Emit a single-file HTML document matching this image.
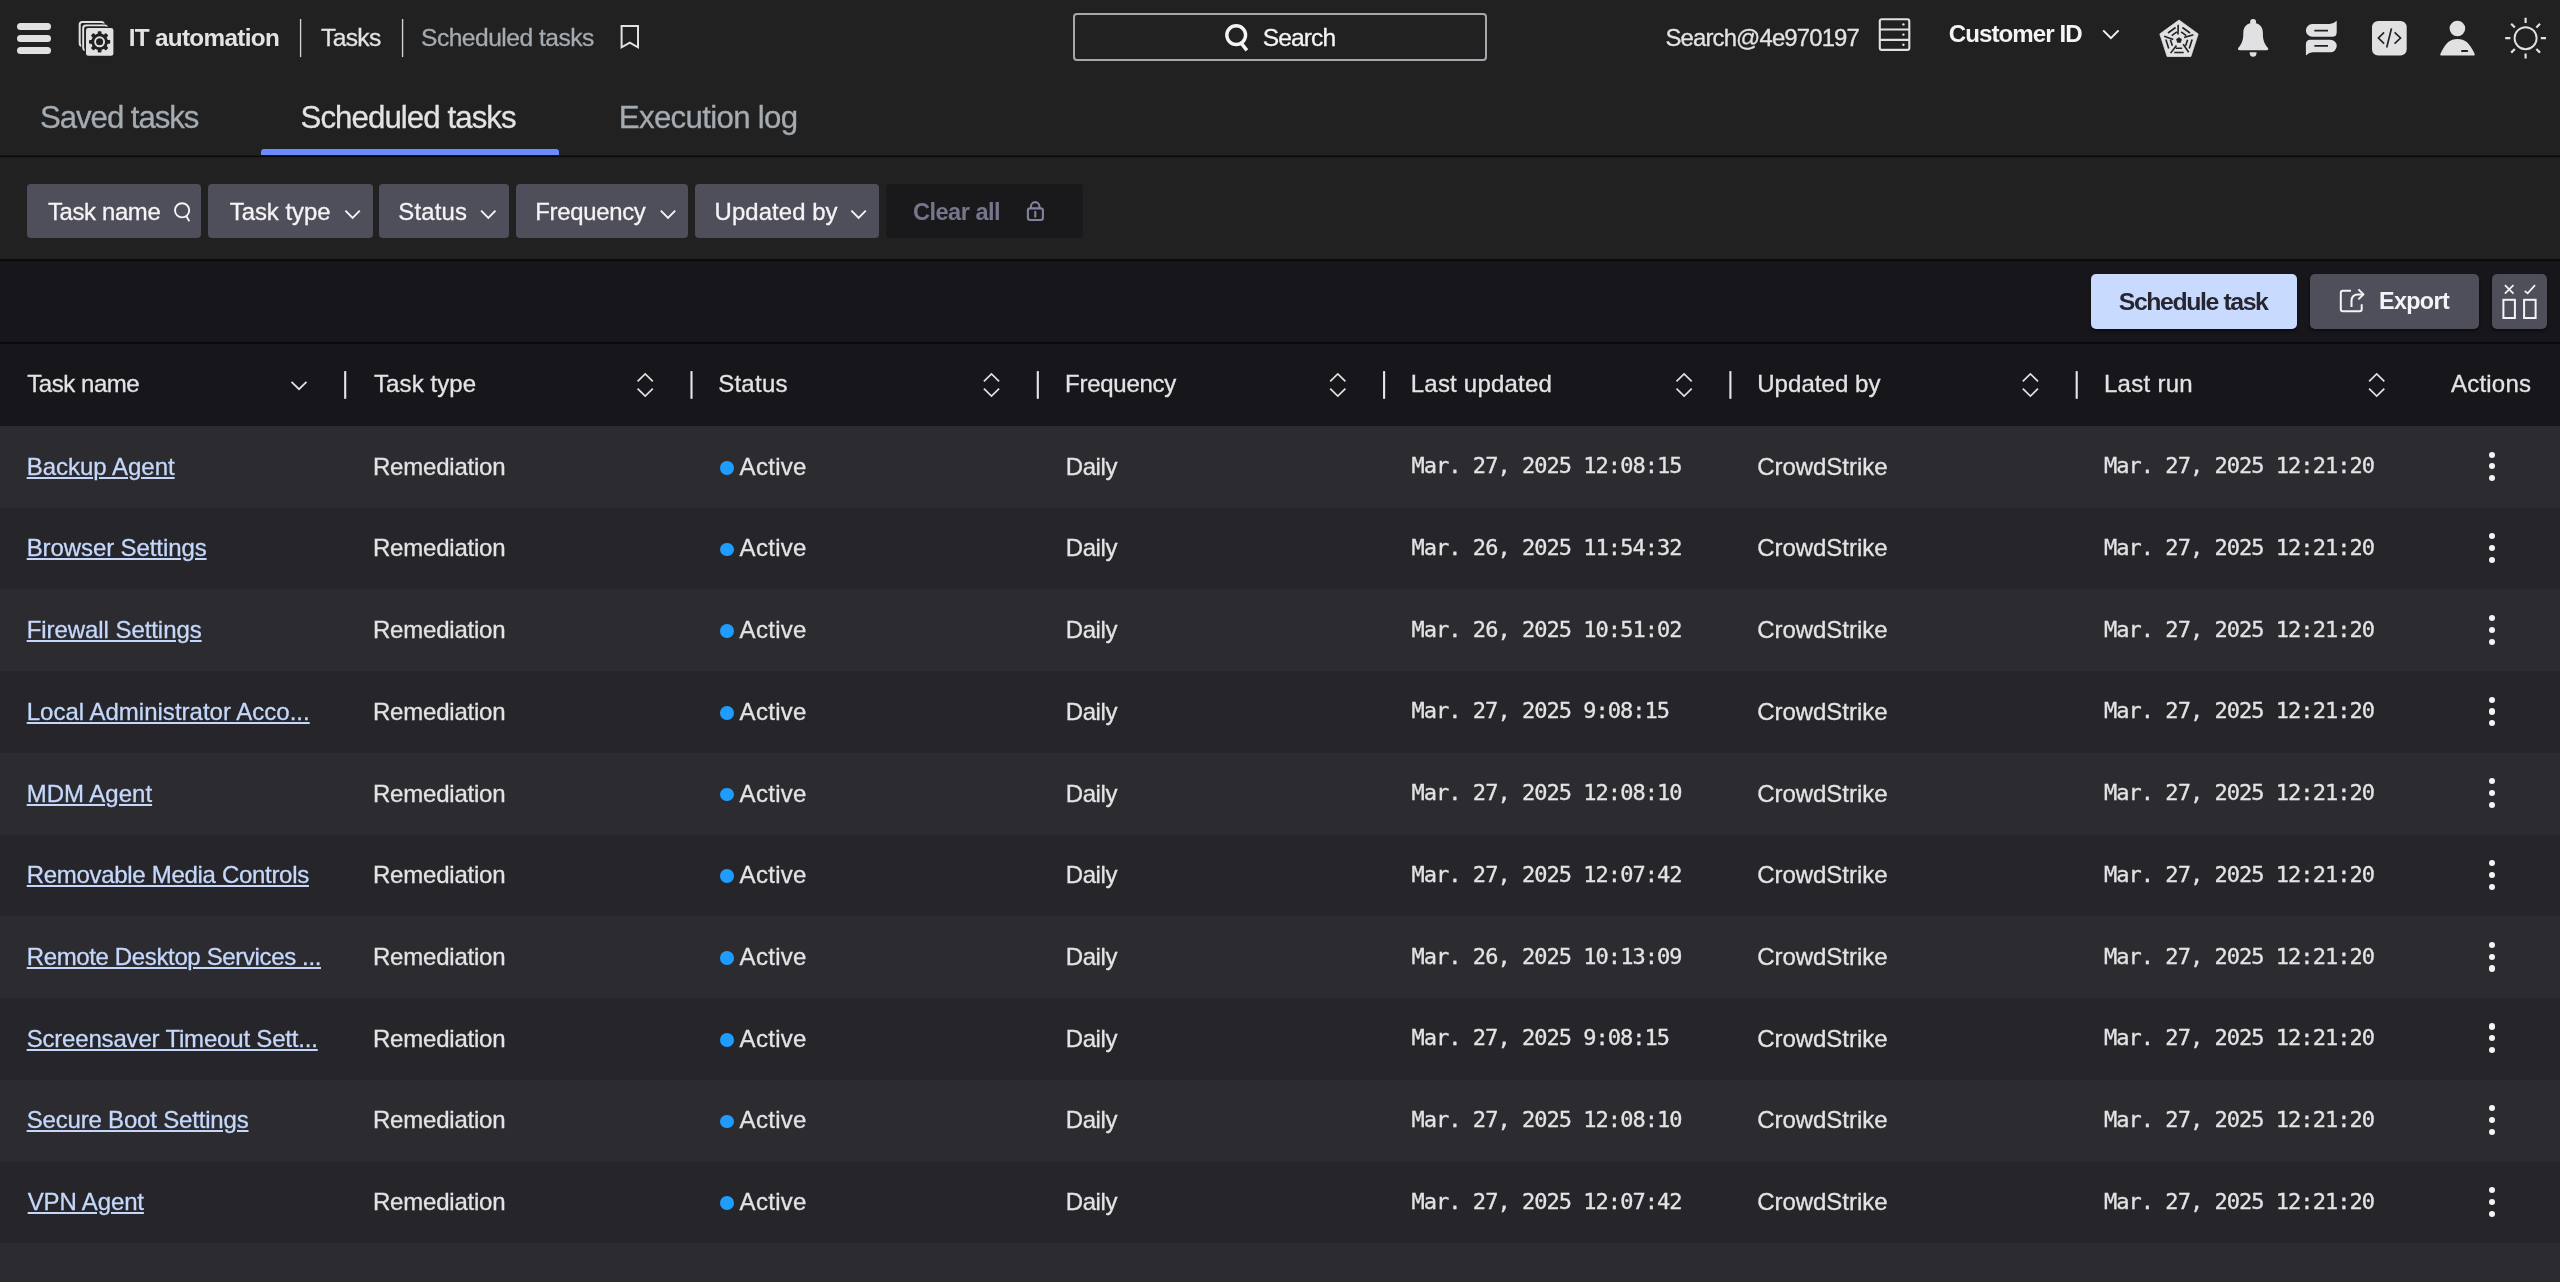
<!DOCTYPE html>
<html lang="en"><head><meta charset="utf-8"><title>IT automation - Scheduled tasks</title>
<style>
html,body{margin:0;padding:0;background:#2c2b30;}
body{width:2560px;height:1282px;position:relative;overflow:hidden;font-family:"Liberation Sans", sans-serif;}
.b{position:absolute;}
.t{position:absolute;white-space:pre;line-height:1;-webkit-text-stroke:0.3px currentColor;}
#txt{position:absolute;left:0;top:0;width:2560px;height:1282px;will-change:transform;}
svg{position:absolute;overflow:visible;}
</style></head><body>
<div class="b" style="left:0px;top:0px;width:2560px;height:157px;background:#212121;"></div>
<div class="b" style="left:0px;top:155px;width:2560px;height:1px;background:#161617;"></div>
<div class="b" style="left:0px;top:156px;width:2560px;height:1px;background:#09090b;"></div>
<div class="b" style="left:0px;top:157px;width:2560px;height:1px;background:#1d1d1e;"></div>
<div class="b" style="left:261px;top:149px;width:298px;height:6px;background:#6a8bfd;border-radius:3px 3px 0 0;"></div>
<div class="b" style="left:0px;top:158px;width:2560px;height:101px;background:#212121;"></div>
<div class="b" style="left:0px;top:259px;width:2560px;height:2px;background:#0a0a0c;"></div>
<div class="b" style="left:0px;top:261px;width:2560px;height:83px;background:#17161b;"></div>
<div class="b" style="left:0px;top:261px;width:2560px;height:1px;background:#121115;"></div>
<div class="b" style="left:0px;top:342px;width:2560px;height:2px;background:#0a0a0c;"></div>
<div class="b" style="left:0px;top:344px;width:2560px;height:82px;background:#17161b;"></div>
<div class="b" style="left:0px;top:426px;width:2560px;height:856px;background:#2c2b30;"></div>
<div class="b" style="left:0px;top:508px;width:2560px;height:81px;background:#26252a;"></div>
<div class="b" style="left:0px;top:507px;width:2560px;height:1px;background:#2a292e;"></div>
<div class="b" style="left:0px;top:589px;width:2560px;height:1px;background:#2a292e;"></div>
<div class="b" style="left:0px;top:672px;width:2560px;height:80px;background:#26252a;"></div>
<div class="b" style="left:0px;top:671px;width:2560px;height:1px;background:#27262b;"></div>
<div class="b" style="left:0px;top:752px;width:2560px;height:1px;background:#27262b;"></div>
<div class="b" style="left:0px;top:835px;width:2560px;height:81px;background:#26252a;"></div>
<div class="b" style="left:0px;top:834px;width:2560px;height:1px;background:#29282d;"></div>
<div class="b" style="left:0px;top:916px;width:2560px;height:1px;background:#2b2a2f;"></div>
<div class="b" style="left:0px;top:998px;width:2560px;height:81px;background:#26252a;"></div>
<div class="b" style="left:0px;top:997px;width:2560px;height:1px;background:#2b2a2f;"></div>
<div class="b" style="left:0px;top:1079px;width:2560px;height:1px;background:#28272c;"></div>
<div class="b" style="left:0px;top:1162px;width:2560px;height:81px;background:#26252a;"></div>
<div class="b" style="left:0px;top:1161px;width:2560px;height:1px;background:#28272c;"></div>
<div class="b" style="left:17px;top:23px;width:34px;height:7px;background:#e1e1e3;border-radius:3.5px;"></div>
<div class="b" style="left:17px;top:35px;width:34px;height:7px;background:#e1e1e3;border-radius:3.5px;"></div>
<div class="b" style="left:17px;top:47px;width:34px;height:7px;background:#e1e1e3;border-radius:3.5px;"></div>
<div class="b" style="left:1073px;top:13px;width:414px;height:48px;background:transparent;box-sizing:border-box;border:2px solid #a3a8ad;border-radius:4px;"></div>
<div class="b" style="left:27.3px;top:184px;width:174.0px;height:54.4px;background:#4f4e5b;border-radius:4px;"></div>
<div class="b" style="left:208px;top:184px;width:164.6px;height:54.4px;background:#4f4e5b;border-radius:4px;"></div>
<div class="b" style="left:379px;top:184px;width:129.9px;height:54.4px;background:#4f4e5b;border-radius:4px;"></div>
<div class="b" style="left:515.7px;top:184px;width:172.3px;height:54.4px;background:#4f4e5b;border-radius:4px;"></div>
<div class="b" style="left:695px;top:184px;width:184px;height:54.4px;background:#4f4e5b;border-radius:4px;"></div>
<div class="b" style="left:886px;top:184px;width:197px;height:54.4px;background:#19191b;border-radius:4px;"></div>
<div class="b" style="left:2091px;top:274px;width:206.3px;height:55px;background:#c8dbfe;border-radius:5px;box-shadow:0 2px 3px rgba(0,0,0,.5);"></div>
<div class="b" style="left:2310px;top:274px;width:168.5px;height:54.5px;background:#4f4e5b;border-radius:5px;box-shadow:0 2px 3px rgba(0,0,0,.5);"></div>
<div class="b" style="left:2492px;top:274px;width:54.7px;height:55px;background:#4f4e5b;border-radius:5px;box-shadow:0 2px 3px rgba(0,0,0,.5);"></div>
<div class="b" style="left:719.9px;top:460.9px;width:13.8px;height:13.8px;background:#1f9dff;border-radius:50%;"></div>
<div class="b" style="left:2489.2px;top:451.5px;width:6.2px;height:6.2px;background:#f4f4f6;border-radius:50%;"></div>
<div class="b" style="left:2489.2px;top:463.3px;width:6.2px;height:6.2px;background:#f4f4f6;border-radius:50%;"></div>
<div class="b" style="left:2489.2px;top:475.2px;width:6.2px;height:6.2px;background:#f4f4f6;border-radius:50%;"></div>
<div class="b" style="left:719.9px;top:542.6px;width:13.8px;height:13.8px;background:#1f9dff;border-radius:50%;"></div>
<div class="b" style="left:2489.2px;top:533.2px;width:6.2px;height:6.2px;background:#f4f4f6;border-radius:50%;"></div>
<div class="b" style="left:2489.2px;top:545.0px;width:6.2px;height:6.2px;background:#f4f4f6;border-radius:50%;"></div>
<div class="b" style="left:2489.2px;top:556.9px;width:6.2px;height:6.2px;background:#f4f4f6;border-radius:50%;"></div>
<div class="b" style="left:719.9px;top:624.3px;width:13.8px;height:13.8px;background:#1f9dff;border-radius:50%;"></div>
<div class="b" style="left:2489.2px;top:614.9px;width:6.2px;height:6.2px;background:#f4f4f6;border-radius:50%;"></div>
<div class="b" style="left:2489.2px;top:626.7px;width:6.2px;height:6.2px;background:#f4f4f6;border-radius:50%;"></div>
<div class="b" style="left:2489.2px;top:638.6px;width:6.2px;height:6.2px;background:#f4f4f6;border-radius:50%;"></div>
<div class="b" style="left:719.9px;top:706.0px;width:13.8px;height:13.8px;background:#1f9dff;border-radius:50%;"></div>
<div class="b" style="left:2489.2px;top:696.6px;width:6.2px;height:6.2px;background:#f4f4f6;border-radius:50%;"></div>
<div class="b" style="left:2489.2px;top:708.4px;width:6.2px;height:6.2px;background:#f4f4f6;border-radius:50%;"></div>
<div class="b" style="left:2489.2px;top:720.3px;width:6.2px;height:6.2px;background:#f4f4f6;border-radius:50%;"></div>
<div class="b" style="left:719.9px;top:787.7px;width:13.8px;height:13.8px;background:#1f9dff;border-radius:50%;"></div>
<div class="b" style="left:2489.2px;top:778.3px;width:6.2px;height:6.2px;background:#f4f4f6;border-radius:50%;"></div>
<div class="b" style="left:2489.2px;top:790.1px;width:6.2px;height:6.2px;background:#f4f4f6;border-radius:50%;"></div>
<div class="b" style="left:2489.2px;top:802.0px;width:6.2px;height:6.2px;background:#f4f4f6;border-radius:50%;"></div>
<div class="b" style="left:719.9px;top:869.4px;width:13.8px;height:13.8px;background:#1f9dff;border-radius:50%;"></div>
<div class="b" style="left:2489.2px;top:860.0px;width:6.2px;height:6.2px;background:#f4f4f6;border-radius:50%;"></div>
<div class="b" style="left:2489.2px;top:871.8px;width:6.2px;height:6.2px;background:#f4f4f6;border-radius:50%;"></div>
<div class="b" style="left:2489.2px;top:883.7px;width:6.2px;height:6.2px;background:#f4f4f6;border-radius:50%;"></div>
<div class="b" style="left:719.9px;top:951.1px;width:13.8px;height:13.8px;background:#1f9dff;border-radius:50%;"></div>
<div class="b" style="left:2489.2px;top:941.7px;width:6.2px;height:6.2px;background:#f4f4f6;border-radius:50%;"></div>
<div class="b" style="left:2489.2px;top:953.5px;width:6.2px;height:6.2px;background:#f4f4f6;border-radius:50%;"></div>
<div class="b" style="left:2489.2px;top:965.4px;width:6.2px;height:6.2px;background:#f4f4f6;border-radius:50%;"></div>
<div class="b" style="left:719.9px;top:1032.8px;width:13.8px;height:13.8px;background:#1f9dff;border-radius:50%;"></div>
<div class="b" style="left:2489.2px;top:1023.4px;width:6.2px;height:6.2px;background:#f4f4f6;border-radius:50%;"></div>
<div class="b" style="left:2489.2px;top:1035.2px;width:6.2px;height:6.2px;background:#f4f4f6;border-radius:50%;"></div>
<div class="b" style="left:2489.2px;top:1047.1px;width:6.2px;height:6.2px;background:#f4f4f6;border-radius:50%;"></div>
<div class="b" style="left:719.9px;top:1114.5px;width:13.8px;height:13.8px;background:#1f9dff;border-radius:50%;"></div>
<div class="b" style="left:2489.2px;top:1105.1px;width:6.2px;height:6.2px;background:#f4f4f6;border-radius:50%;"></div>
<div class="b" style="left:2489.2px;top:1116.9px;width:6.2px;height:6.2px;background:#f4f4f6;border-radius:50%;"></div>
<div class="b" style="left:2489.2px;top:1128.8px;width:6.2px;height:6.2px;background:#f4f4f6;border-radius:50%;"></div>
<div class="b" style="left:719.9px;top:1196.2px;width:13.8px;height:13.8px;background:#1f9dff;border-radius:50%;"></div>
<div class="b" style="left:2489.2px;top:1186.8px;width:6.2px;height:6.2px;background:#f4f4f6;border-radius:50%;"></div>
<div class="b" style="left:2489.2px;top:1198.6px;width:6.2px;height:6.2px;background:#f4f4f6;border-radius:50%;"></div>
<div class="b" style="left:2489.2px;top:1210.5px;width:6.2px;height:6.2px;background:#f4f4f6;border-radius:50%;"></div>
<svg style="left:70px;top:12px" width="60" height="52" viewBox="70 12 60 52"><g fill="#212121" stroke="#e1e1e3" stroke-width="2">
<rect x="79.7" y="21.9" width="24.2" height="24" rx="2.6"/>
<rect x="81.2" y="23.4" width="29.4" height="29.4" rx="3.4" fill="#212121" stroke="none"/>
<rect x="83.2" y="25.4" width="24" height="24.8" rx="2.6"/>
<rect x="84.6" y="26.6" width="30" height="30" rx="3.4" fill="#212121" stroke="none"/>
</g>
<rect x="86" y="28" width="27.4" height="27.8" rx="2.4" fill="#e1e1e3"/>
<g fill="#212121"><circle cx="99.6" cy="41.8" r="8.3"/><rect x="97.70" y="31.20" width="3.8" height="4.4" rx="0.9" transform="rotate(0 99.6 41.8)"/><rect x="97.70" y="31.20" width="3.8" height="4.4" rx="0.9" transform="rotate(45 99.6 41.8)"/><rect x="97.70" y="31.20" width="3.8" height="4.4" rx="0.9" transform="rotate(90 99.6 41.8)"/><rect x="97.70" y="31.20" width="3.8" height="4.4" rx="0.9" transform="rotate(135 99.6 41.8)"/><rect x="97.70" y="31.20" width="3.8" height="4.4" rx="0.9" transform="rotate(180 99.6 41.8)"/><rect x="97.70" y="31.20" width="3.8" height="4.4" rx="0.9" transform="rotate(225 99.6 41.8)"/><rect x="97.70" y="31.20" width="3.8" height="4.4" rx="0.9" transform="rotate(270 99.6 41.8)"/><rect x="97.70" y="31.20" width="3.8" height="4.4" rx="0.9" transform="rotate(315 99.6 41.8)"/></g>
<circle cx="99.6" cy="41.8" r="4.5" fill="none" stroke="#e1e1e3" stroke-width="1.9"/></svg>
<svg style="left:612px;top:18px" width="36" height="40" viewBox="612 18 36 40"><path d="M621.6 26 H638 V47.3 L629.8 42.6 L621.6 47.3 Z" fill="none" stroke="#e1e1e3" stroke-width="2" stroke-linejoin="miter"/></svg>
<svg style="left:1218px;top:18px" width="40" height="40" viewBox="1218 18 40 40"><circle cx="1236.2" cy="35.1" r="9.4" fill="none" stroke="#f4f4f6" stroke-width="3.4"/><path d="M1241.6 43.6 L1246.9 50.4" stroke="#f4f4f6" stroke-width="3.4" stroke-linecap="butt"/></svg>
<svg style="left:1872px;top:12px" width="46" height="46" viewBox="1872 12 46 46"><g fill="none" stroke="#e1e1e3" stroke-width="2.1"><rect x="1879.8" y="19.3" width="29.5" height="30.6" rx="2"/>
<path d="M1880 29.5 H1909.2 M1880 39.9 H1909.2"/></g>
<g fill="#e1e1e3"><circle cx="1903.4" cy="24.4" r="1.2"/><circle cx="1903.4" cy="34.6" r="1.2"/><circle cx="1903.4" cy="44.8" r="1.2"/></g></svg>
<svg style="left:2098px;top:24px" width="26" height="20" viewBox="2098 24 26 20"><path d="M2103.2 30.4 L2110.9 38.2 L2118.6 30.4" fill="none" stroke="#f4f4f6" stroke-width="2"/></svg>
<svg style="left:2154px;top:14px" width="50" height="50" viewBox="2154 14 50 50"><polygon points="2179.00,20.00 2198.21,33.96 2190.87,56.54 2167.13,56.54 2159.79,33.96" fill="#e1e1e3" stroke="#e1e1e3" stroke-width="0.8" stroke-linejoin="round"/><path d="M2182.43 27.49 L2190.03 33.01 M2181.11 31.85 L2186.29 35.61 M2177.99 34.49 L2178.19 24.82 M2192.15 39.53 L2189.25 48.47 M2187.60 39.63 L2185.62 45.72 M2184.12 37.48 L2193.38 34.68 M2183.70 52.50 L2174.30 52.50 M2182.20 48.20 L2175.80 48.20 M2183.17 44.23 L2188.69 52.17 M2168.75 48.47 L2165.85 39.53 M2172.38 45.72 L2170.40 39.63 M2176.46 45.41 L2170.61 53.12 M2167.97 33.01 L2175.57 27.49 M2171.71 35.61 L2176.89 31.85 M2173.26 39.39 L2164.12 36.21 " stroke="#212121" stroke-width="1.6" fill="none"/><polygon points="2179.00,37.20 2181.85,39.27 2180.76,42.63 2177.24,42.63 2176.15,39.27" fill="#212121"/></svg>
<svg style="left:2232px;top:14px" width="42" height="48" viewBox="2232 14 42 48"><g fill="#e1e1e3"><circle cx="2253.1" cy="21.9" r="3.0"/>
<path d="M2239.8 50.2 Q2236.9 50.2 2238.4 47.8 C2242.2 43.4 2243.3 40 2243.3 33 C2243.3 26.4 2247.6 22.8 2253.1 22.8 C2258.6 22.8 2262.9 26.4 2262.9 33 C2262.9 40 2264 43.4 2267.8 47.8 Q2269.3 50.2 2266.4 50.2 Z"/>
<path d="M2249.6 52.2 H2256.6 A3.5 4.6 0 0 1 2249.6 52.2 Z"/></g></svg>
<svg style="left:2300px;top:16px" width="42" height="44" viewBox="2300 16 42 44"><g fill="#e1e1e3">
<path d="M2312.2 24.1 H2329.5 Q2333.5 24 2336.7 20.8 V32.2 Q2336.7 36.7 2332.2 36.7 H2312.2 A6.3 6.3 0 0 1 2312.2 24.1 Z"/>
<path d="M2330.4 52.3 H2313 Q2309.2 52.4 2305.9 55.4 V44.2 Q2305.9 39.7 2310.4 39.7 H2330.4 A6.3 6.3 0 0 1 2330.4 52.3 Z"/></g>
<path d="M2314.4 30.6 H2328 M2314.4 45.9 H2328" stroke="#212121" stroke-width="1.6"/></svg>
<svg style="left:2366px;top:16px" width="46" height="44" viewBox="2366 16 46 44"><rect x="2372" y="20.9" width="34.7" height="34.6" rx="6.2" fill="#e1e1e3"/>
<path d="M2384.1 32.4 L2378.4 38 L2384.1 43.7 M2391.5 28.4 L2386.7 47.5 M2394.6 32.4 L2400.5 38 L2394.6 43.7" fill="none" stroke="#212121" stroke-width="1.7"/></svg>
<svg style="left:2434px;top:16px" width="46" height="44" viewBox="2434 16 46 44"><g fill="#e1e1e3"><circle cx="2457.4" cy="28.5" r="7.8"/>
<path d="M2441.8 55.6 Q2439.4 55.6 2440.7 53.3 C2446 42.5 2450 39 2457.5 39 C2465 39 2469 42.5 2474.4 53.3 Q2475.6 55.6 2473.2 55.6 Z"/></g>
<path d="M2462 50.9 H2467.2" stroke="#212121" stroke-width="2" stroke-linecap="round"/></svg>
<svg style="left:2500px;top:12px" width="52" height="52" viewBox="2500 12 52 52"><circle cx="2525.6" cy="38.2" r="11" fill="none" stroke="#e1e1e3" stroke-width="1.9"/><path d="M2540.80 38.20 L2546.00 38.20 M2536.35 48.95 L2540.02 52.62 M2525.60 53.40 L2525.60 58.60 M2514.85 48.95 L2511.18 52.62 M2510.40 38.20 L2505.20 38.20 M2514.85 27.45 L2511.18 23.78 M2525.60 23.00 L2525.60 17.80 M2536.35 27.45 L2540.02 23.78 " stroke="#e1e1e3" stroke-width="2.2"/></svg>
<svg style="left:170px;top:198px" width="26" height="28" viewBox="170 198 26 28"><circle cx="182.1" cy="210.3" r="7.1" fill="none" stroke="#f4f4f6" stroke-width="1.9"/><path d="M186.2 216.1 L189.3 221.2" stroke="#f4f4f6" stroke-width="1.9"/></svg>
<svg style="left:342px;top:206px" width="24" height="18" viewBox="342 206 24 18"><path d="M345.4 210.7 L352.6 217.9 L359.8 210.7" fill="none" stroke="#f4f4f6" stroke-width="1.9"/></svg>
<svg style="left:478px;top:206px" width="24" height="18" viewBox="478 206 24 18"><path d="M481.1 210.7 L488.3 217.9 L495.5 210.7" fill="none" stroke="#f4f4f6" stroke-width="1.9"/></svg>
<svg style="left:657px;top:206px" width="24" height="18" viewBox="657 206 24 18"><path d="M660.8 210.7 L668.0 217.9 L675.2 210.7" fill="none" stroke="#f4f4f6" stroke-width="1.9"/></svg>
<svg style="left:848px;top:206px" width="24" height="18" viewBox="848 206 24 18"><path d="M851.4 210.7 L858.6 217.9 L865.8 210.7" fill="none" stroke="#f4f4f6" stroke-width="1.9"/></svg>
<svg style="left:1020px;top:196px" width="30" height="30" viewBox="1020 196 30 30"><g fill="none" stroke="#8282a0" stroke-width="2.1"><rect x="1027.9" y="208.4" width="15" height="11.6" rx="2.2"/>
<path d="M1031 208 V206.4 A4.2 4.3 0 0 1 1039.4 206.4 V208"/><path d="M1035.3 211.7 V216.7" stroke-linecap="round"/></g></svg>
<svg style="left:2334px;top:284px" width="36" height="34" viewBox="2334 284 36 34"><g fill="none" stroke="#f4f4f6" stroke-width="2" stroke-linejoin="round">
<path d="M2351 290.8 H2342.8 Q2340.8 290.8 2340.8 292.8 V309.3 Q2340.8 311.3 2342.8 311.3 H2359.7 Q2361.7 311.3 2361.7 309.3 V304.2"/>
<path d="M2351.5 306.9 V301 Q2351.5 294.4 2358 294.4 H2363"/><path d="M2358.4 289.4 L2363.5 294.4 L2358.4 299.4"/></g></svg>
<svg style="left:2498px;top:280px" width="44" height="44" viewBox="2498 280 44 44"><g fill="none" stroke="#f4f4f6" stroke-width="1.7">
<path d="M2504.9 285.1 L2513.5 293.7 M2513.5 285.1 L2504.9 293.7"/>
<path d="M2524.8 291 L2527.7 293.4 L2535 285.1"/></g>
<g fill="none" stroke="#f4f4f6" stroke-width="2"><rect x="2503.4" y="299.8" width="11.5" height="18.2"/><rect x="2524.1" y="299.8" width="11.5" height="18.2"/></g></svg>
<svg style="left:286px;top:376px" width="26" height="20" viewBox="286 376 26 20"><path d="M291.5 381.8 L299 389.2 L306.5 381.8" fill="none" stroke="#e1e1e3" stroke-width="1.8"/></svg>
<svg style="left:634px;top:368px" width="24" height="34" viewBox="634 368 24 34"><path d="M637.6 381.3 L645.2 373.9 L652.8 381.3 M637.6 388.7 L645.2 396.1 L652.8 388.7" fill="none" stroke="#e1e1e3" stroke-width="1.7"/></svg>
<svg style="left:980px;top:368px" width="24" height="34" viewBox="980 368 24 34"><path d="M983.9 381.3 L991.5 373.9 L999.1 381.3 M983.9 388.7 L991.5 396.1 L999.1 388.7" fill="none" stroke="#e1e1e3" stroke-width="1.7"/></svg>
<svg style="left:1327px;top:368px" width="24" height="34" viewBox="1327 368 24 34"><path d="M1330.2 381.3 L1337.8 373.9 L1345.4 381.3 M1330.2 388.7 L1337.8 396.1 L1345.4 388.7" fill="none" stroke="#e1e1e3" stroke-width="1.7"/></svg>
<svg style="left:1673px;top:368px" width="24" height="34" viewBox="1673 368 24 34"><path d="M1676.5 381.3 L1684.1 373.9 L1691.7 381.3 M1676.5 388.7 L1684.1 396.1 L1691.7 388.7" fill="none" stroke="#e1e1e3" stroke-width="1.7"/></svg>
<svg style="left:2019px;top:368px" width="24" height="34" viewBox="2019 368 24 34"><path d="M2022.8 381.3 L2030.4 373.9 L2038.0 381.3 M2022.8 388.7 L2030.4 396.1 L2038.0 388.7" fill="none" stroke="#e1e1e3" stroke-width="1.7"/></svg>
<svg style="left:2366px;top:368px" width="24" height="34" viewBox="2366 368 24 34"><path d="M2369.1 381.3 L2376.7 373.9 L2384.3 381.3 M2369.1 388.7 L2376.7 396.1 L2384.3 388.7" fill="none" stroke="#e1e1e3" stroke-width="1.7"/></svg>
<svg style="left:296px;top:16px" width="110" height="44" viewBox="296 16 110 44"><rect x="299.9" y="19" width="1.35" height="38.1" fill="#d2d2d4"/><rect x="401.9" y="19" width="1.35" height="38.1" fill="#d2d2d4"/></svg>
<svg style="left:341px;top:368px" width="8" height="34" viewBox="341 368 8 34"><rect x="344.15" y="371.1" width="2.1" height="27.7" fill="#e6e6e8"/></svg>
<svg style="left:687px;top:368px" width="8" height="34" viewBox="687 368 8 34"><rect x="690.45" y="371.1" width="2.1" height="27.7" fill="#e6e6e8"/></svg>
<svg style="left:1033px;top:368px" width="8" height="34" viewBox="1033 368 8 34"><rect x="1036.75" y="371.1" width="2.1" height="27.7" fill="#e6e6e8"/></svg>
<svg style="left:1380px;top:368px" width="8" height="34" viewBox="1380 368 8 34"><rect x="1383.05" y="371.1" width="2.1" height="27.7" fill="#e6e6e8"/></svg>
<svg style="left:1726px;top:368px" width="8" height="34" viewBox="1726 368 8 34"><rect x="1729.35" y="371.1" width="2.1" height="27.7" fill="#e6e6e8"/></svg>
<svg style="left:2072px;top:368px" width="8" height="34" viewBox="2072 368 8 34"><rect x="2075.65" y="371.1" width="2.1" height="27.7" fill="#e6e6e8"/></svg>
<div id="txt">
<span class="t" style='left:128.70px;top:26px;font-size:24.3px;color:#e3e3e5;font-weight:700;-webkit-text-stroke:0;letter-spacing:-0.686px;'>IT automation</span>
<span class="t" style='left:321.00px;top:26px;font-size:24.6px;color:#e3e3e5;letter-spacing:-0.642px;'>Tasks</span>
<span class="t" style='left:421.00px;top:26px;font-size:24.6px;color:#a4abb1;letter-spacing:-0.512px;'>Scheduled tasks</span>
<span class="t" style='left:1262.70px;top:26px;font-size:24.6px;color:#f4f4f6;letter-spacing:-0.889px;'>Search</span>
<span class="t" style='left:1665.50px;top:26px;font-size:23.9px;color:#e3e3e5;letter-spacing:-0.854px;'>Search@4e970197</span>
<span class="t" style='left:1948.70px;top:22px;font-size:24.1px;color:#f4f4f6;font-weight:700;-webkit-text-stroke:0;letter-spacing:-0.925px;'>Customer ID</span>
<span class="t" style='left:40.00px;top:102px;font-size:31.2px;color:#a4abb1;letter-spacing:-1.049px;'>Saved tasks</span>
<span class="t" style='left:300.50px;top:102px;font-size:31.2px;color:#e3e3e5;letter-spacing:-0.911px;'>Scheduled tasks</span>
<span class="t" style='left:618.80px;top:102px;font-size:31.2px;color:#a4abb1;letter-spacing:-0.658px;'>Execution log</span>
<span class="t" style='left:48.00px;top:200px;font-size:23.9px;color:#f4f4f6;letter-spacing:-0.354px;'>Task name</span>
<span class="t" style='left:229.70px;top:200px;font-size:23.9px;color:#f4f4f6;'>Task type</span>
<span class="t" style='left:398.30px;top:200px;font-size:23.9px;color:#f4f4f6;letter-spacing:0.183px;'>Status</span>
<span class="t" style='left:535.30px;top:200px;font-size:23.9px;color:#f4f4f6;letter-spacing:-0.304px;'>Frequency</span>
<span class="t" style='left:714.60px;top:200px;font-size:23.9px;color:#f4f4f6;letter-spacing:0.083px;'>Updated by</span>
<span class="t" style='left:913.00px;top:201px;font-size:23.6px;color:#75758c;font-weight:700;-webkit-text-stroke:0;letter-spacing:-0.531px;'>Clear all</span>
<span class="t" style='left:2118.80px;top:290px;font-size:24.8px;color:#27252f;font-weight:700;-webkit-text-stroke:0;letter-spacing:-1.389px;'>Schedule task</span>
<span class="t" style='left:2379.00px;top:290px;font-size:23.3px;color:#f4f4f6;font-weight:700;-webkit-text-stroke:0;letter-spacing:-0.625px;'>Export</span>
<span class="t" style='left:27.30px;top:372px;font-size:24px;color:#e3e3e5;letter-spacing:-0.463px;'>Task name</span>
<span class="t" style='left:374.00px;top:372px;font-size:24px;color:#e3e3e5;letter-spacing:0.096px;'>Task type</span>
<span class="t" style='left:718.20px;top:372px;font-size:24px;color:#e3e3e5;letter-spacing:0.252px;'>Status</span>
<span class="t" style='left:1065.00px;top:372px;font-size:24px;color:#e3e3e5;letter-spacing:-0.261px;'>Frequency</span>
<span class="t" style='left:1410.80px;top:372px;font-size:24px;color:#e3e3e5;letter-spacing:0.206px;'>Last updated</span>
<span class="t" style='left:1757.20px;top:372px;font-size:24px;color:#e3e3e5;letter-spacing:0.061px;'>Updated by</span>
<span class="t" style='left:2104.00px;top:372px;font-size:24px;color:#e3e3e5;letter-spacing:0.276px;'>Last run</span>
<span class="t" style='left:2451.00px;top:372px;font-size:24px;color:#e3e3e5;letter-spacing:0.216px;'>Actions</span>
<a class="t" style='left:26.70px;top:455px;font-size:24px;color:#c5d8fc;letter-spacing:-0.015px;text-decoration:underline;text-decoration-thickness:2px;text-underline-offset:2px;'>Backup Agent</a>
<span class="t" style='left:373.00px;top:455px;font-size:24px;color:#e3e3e5;letter-spacing:-0.219px;'>Remediation</span>
<span class="t" style='left:739.60px;top:455px;font-size:24px;color:#e3e3e5;letter-spacing:0.298px;'>Active</span>
<span class="t" style='left:1065.70px;top:455px;font-size:24px;color:#e3e3e5;letter-spacing:-0.386px;'>Daily</span>
<span class="t" style='left:1411.50px;top:455px;font-size:22px;color:#e3e3e5;font-family:"DejaVu Sans Mono", "Liberation Mono", monospace;letter-spacing:-0.972px;'>Mar. 27, 2025 12:08:15</span>
<span class="t" style='left:1757.20px;top:455px;font-size:24px;color:#e3e3e5;letter-spacing:-0.035px;'>CrowdStrike</span>
<span class="t" style='left:2104.00px;top:455px;font-size:22px;color:#e3e3e5;font-family:"DejaVu Sans Mono", "Liberation Mono", monospace;letter-spacing:-0.972px;'>Mar. 27, 2025 12:21:20</span>
<a class="t" style='left:26.70px;top:536px;font-size:24px;color:#c5d8fc;letter-spacing:-0.094px;text-decoration:underline;text-decoration-thickness:2px;text-underline-offset:2px;'>Browser Settings</a>
<span class="t" style='left:373.00px;top:536px;font-size:24px;color:#e3e3e5;letter-spacing:-0.219px;'>Remediation</span>
<span class="t" style='left:739.60px;top:536px;font-size:24px;color:#e3e3e5;letter-spacing:0.298px;'>Active</span>
<span class="t" style='left:1065.70px;top:536px;font-size:24px;color:#e3e3e5;letter-spacing:-0.386px;'>Daily</span>
<span class="t" style='left:1411.50px;top:537px;font-size:22px;color:#e3e3e5;font-family:"DejaVu Sans Mono", "Liberation Mono", monospace;letter-spacing:-0.972px;'>Mar. 26, 2025 11:54:32</span>
<span class="t" style='left:1757.20px;top:536px;font-size:24px;color:#e3e3e5;letter-spacing:-0.035px;'>CrowdStrike</span>
<span class="t" style='left:2104.00px;top:537px;font-size:22px;color:#e3e3e5;font-family:"DejaVu Sans Mono", "Liberation Mono", monospace;letter-spacing:-0.972px;'>Mar. 27, 2025 12:21:20</span>
<a class="t" style='left:26.70px;top:618px;font-size:24px;color:#c5d8fc;letter-spacing:-0.066px;text-decoration:underline;text-decoration-thickness:2px;text-underline-offset:2px;'>Firewall Settings</a>
<span class="t" style='left:373.00px;top:618px;font-size:24px;color:#e3e3e5;letter-spacing:-0.219px;'>Remediation</span>
<span class="t" style='left:739.60px;top:618px;font-size:24px;color:#e3e3e5;letter-spacing:0.298px;'>Active</span>
<span class="t" style='left:1065.70px;top:618px;font-size:24px;color:#e3e3e5;letter-spacing:-0.386px;'>Daily</span>
<span class="t" style='left:1411.50px;top:619px;font-size:22px;color:#e3e3e5;font-family:"DejaVu Sans Mono", "Liberation Mono", monospace;letter-spacing:-0.972px;'>Mar. 26, 2025 10:51:02</span>
<span class="t" style='left:1757.20px;top:618px;font-size:24px;color:#e3e3e5;letter-spacing:-0.035px;'>CrowdStrike</span>
<span class="t" style='left:2104.00px;top:619px;font-size:22px;color:#e3e3e5;font-family:"DejaVu Sans Mono", "Liberation Mono", monospace;letter-spacing:-0.972px;'>Mar. 27, 2025 12:21:20</span>
<a class="t" style='left:26.70px;top:700px;font-size:24px;color:#c5d8fc;letter-spacing:0.009px;text-decoration:underline;text-decoration-thickness:2px;text-underline-offset:2px;'>Local Administrator Acco...</a>
<span class="t" style='left:373.00px;top:700px;font-size:24px;color:#e3e3e5;letter-spacing:-0.219px;'>Remediation</span>
<span class="t" style='left:739.60px;top:700px;font-size:24px;color:#e3e3e5;letter-spacing:0.298px;'>Active</span>
<span class="t" style='left:1065.70px;top:700px;font-size:24px;color:#e3e3e5;letter-spacing:-0.386px;'>Daily</span>
<span class="t" style='left:1411.50px;top:700px;font-size:22px;color:#e3e3e5;font-family:"DejaVu Sans Mono", "Liberation Mono", monospace;letter-spacing:-0.977px;'>Mar. 27, 2025 9:08:15</span>
<span class="t" style='left:1757.20px;top:700px;font-size:24px;color:#e3e3e5;letter-spacing:-0.035px;'>CrowdStrike</span>
<span class="t" style='left:2104.00px;top:700px;font-size:22px;color:#e3e3e5;font-family:"DejaVu Sans Mono", "Liberation Mono", monospace;letter-spacing:-0.972px;'>Mar. 27, 2025 12:21:20</span>
<a class="t" style='left:26.70px;top:782px;font-size:24px;color:#c5d8fc;text-decoration:underline;text-decoration-thickness:2px;text-underline-offset:2px;'>MDM Agent</a>
<span class="t" style='left:373.00px;top:782px;font-size:24px;color:#e3e3e5;letter-spacing:-0.219px;'>Remediation</span>
<span class="t" style='left:739.60px;top:782px;font-size:24px;color:#e3e3e5;letter-spacing:0.298px;'>Active</span>
<span class="t" style='left:1065.70px;top:782px;font-size:24px;color:#e3e3e5;letter-spacing:-0.386px;'>Daily</span>
<span class="t" style='left:1411.50px;top:782px;font-size:22px;color:#e3e3e5;font-family:"DejaVu Sans Mono", "Liberation Mono", monospace;letter-spacing:-0.972px;'>Mar. 27, 2025 12:08:10</span>
<span class="t" style='left:1757.20px;top:782px;font-size:24px;color:#e3e3e5;letter-spacing:-0.035px;'>CrowdStrike</span>
<span class="t" style='left:2104.00px;top:782px;font-size:22px;color:#e3e3e5;font-family:"DejaVu Sans Mono", "Liberation Mono", monospace;letter-spacing:-0.972px;'>Mar. 27, 2025 12:21:20</span>
<a class="t" style='left:26.70px;top:863px;font-size:24px;color:#c5d8fc;letter-spacing:-0.303px;text-decoration:underline;text-decoration-thickness:2px;text-underline-offset:2px;'>Removable Media Controls</a>
<span class="t" style='left:373.00px;top:863px;font-size:24px;color:#e3e3e5;letter-spacing:-0.219px;'>Remediation</span>
<span class="t" style='left:739.60px;top:863px;font-size:24px;color:#e3e3e5;letter-spacing:0.298px;'>Active</span>
<span class="t" style='left:1065.70px;top:863px;font-size:24px;color:#e3e3e5;letter-spacing:-0.386px;'>Daily</span>
<span class="t" style='left:1411.50px;top:864px;font-size:22px;color:#e3e3e5;font-family:"DejaVu Sans Mono", "Liberation Mono", monospace;letter-spacing:-0.972px;'>Mar. 27, 2025 12:07:42</span>
<span class="t" style='left:1757.20px;top:863px;font-size:24px;color:#e3e3e5;letter-spacing:-0.035px;'>CrowdStrike</span>
<span class="t" style='left:2104.00px;top:864px;font-size:22px;color:#e3e3e5;font-family:"DejaVu Sans Mono", "Liberation Mono", monospace;letter-spacing:-0.972px;'>Mar. 27, 2025 12:21:20</span>
<a class="t" style='left:26.70px;top:945px;font-size:24px;color:#c5d8fc;letter-spacing:-0.363px;text-decoration:underline;text-decoration-thickness:2px;text-underline-offset:2px;'>Remote Desktop Services ...</a>
<span class="t" style='left:373.00px;top:945px;font-size:24px;color:#e3e3e5;letter-spacing:-0.219px;'>Remediation</span>
<span class="t" style='left:739.60px;top:945px;font-size:24px;color:#e3e3e5;letter-spacing:0.298px;'>Active</span>
<span class="t" style='left:1065.70px;top:945px;font-size:24px;color:#e3e3e5;letter-spacing:-0.386px;'>Daily</span>
<span class="t" style='left:1411.50px;top:946px;font-size:22px;color:#e3e3e5;font-family:"DejaVu Sans Mono", "Liberation Mono", monospace;letter-spacing:-0.972px;'>Mar. 26, 2025 10:13:09</span>
<span class="t" style='left:1757.20px;top:945px;font-size:24px;color:#e3e3e5;letter-spacing:-0.035px;'>CrowdStrike</span>
<span class="t" style='left:2104.00px;top:946px;font-size:22px;color:#e3e3e5;font-family:"DejaVu Sans Mono", "Liberation Mono", monospace;letter-spacing:-0.972px;'>Mar. 27, 2025 12:21:20</span>
<a class="t" style='left:26.70px;top:1027px;font-size:24px;color:#c5d8fc;letter-spacing:-0.188px;text-decoration:underline;text-decoration-thickness:2px;text-underline-offset:2px;'>Screensaver Timeout Sett...</a>
<span class="t" style='left:373.00px;top:1027px;font-size:24px;color:#e3e3e5;letter-spacing:-0.219px;'>Remediation</span>
<span class="t" style='left:739.60px;top:1027px;font-size:24px;color:#e3e3e5;letter-spacing:0.298px;'>Active</span>
<span class="t" style='left:1065.70px;top:1027px;font-size:24px;color:#e3e3e5;letter-spacing:-0.386px;'>Daily</span>
<span class="t" style='left:1411.50px;top:1027px;font-size:22px;color:#e3e3e5;font-family:"DejaVu Sans Mono", "Liberation Mono", monospace;letter-spacing:-0.977px;'>Mar. 27, 2025 9:08:15</span>
<span class="t" style='left:1757.20px;top:1027px;font-size:24px;color:#e3e3e5;letter-spacing:-0.035px;'>CrowdStrike</span>
<span class="t" style='left:2104.00px;top:1027px;font-size:22px;color:#e3e3e5;font-family:"DejaVu Sans Mono", "Liberation Mono", monospace;letter-spacing:-0.972px;'>Mar. 27, 2025 12:21:20</span>
<a class="t" style='left:26.70px;top:1108px;font-size:24px;color:#c5d8fc;letter-spacing:-0.183px;text-decoration:underline;text-decoration-thickness:2px;text-underline-offset:2px;'>Secure Boot Settings</a>
<span class="t" style='left:373.00px;top:1108px;font-size:24px;color:#e3e3e5;letter-spacing:-0.219px;'>Remediation</span>
<span class="t" style='left:739.60px;top:1108px;font-size:24px;color:#e3e3e5;letter-spacing:0.298px;'>Active</span>
<span class="t" style='left:1065.70px;top:1108px;font-size:24px;color:#e3e3e5;letter-spacing:-0.386px;'>Daily</span>
<span class="t" style='left:1411.50px;top:1109px;font-size:22px;color:#e3e3e5;font-family:"DejaVu Sans Mono", "Liberation Mono", monospace;letter-spacing:-0.972px;'>Mar. 27, 2025 12:08:10</span>
<span class="t" style='left:1757.20px;top:1108px;font-size:24px;color:#e3e3e5;letter-spacing:-0.035px;'>CrowdStrike</span>
<span class="t" style='left:2104.00px;top:1109px;font-size:22px;color:#e3e3e5;font-family:"DejaVu Sans Mono", "Liberation Mono", monospace;letter-spacing:-0.972px;'>Mar. 27, 2025 12:21:20</span>
<a class="t" style='left:27.70px;top:1190px;font-size:24px;color:#c5d8fc;letter-spacing:-0.133px;text-decoration:underline;text-decoration-thickness:2px;text-underline-offset:2px;'>VPN Agent</a>
<span class="t" style='left:373.00px;top:1190px;font-size:24px;color:#e3e3e5;letter-spacing:-0.219px;'>Remediation</span>
<span class="t" style='left:739.60px;top:1190px;font-size:24px;color:#e3e3e5;letter-spacing:0.298px;'>Active</span>
<span class="t" style='left:1065.70px;top:1190px;font-size:24px;color:#e3e3e5;letter-spacing:-0.386px;'>Daily</span>
<span class="t" style='left:1411.50px;top:1191px;font-size:22px;color:#e3e3e5;font-family:"DejaVu Sans Mono", "Liberation Mono", monospace;letter-spacing:-0.972px;'>Mar. 27, 2025 12:07:42</span>
<span class="t" style='left:1757.20px;top:1190px;font-size:24px;color:#e3e3e5;letter-spacing:-0.035px;'>CrowdStrike</span>
<span class="t" style='left:2104.00px;top:1191px;font-size:22px;color:#e3e3e5;font-family:"DejaVu Sans Mono", "Liberation Mono", monospace;letter-spacing:-0.972px;'>Mar. 27, 2025 12:21:20</span>
</div>
</body></html>
